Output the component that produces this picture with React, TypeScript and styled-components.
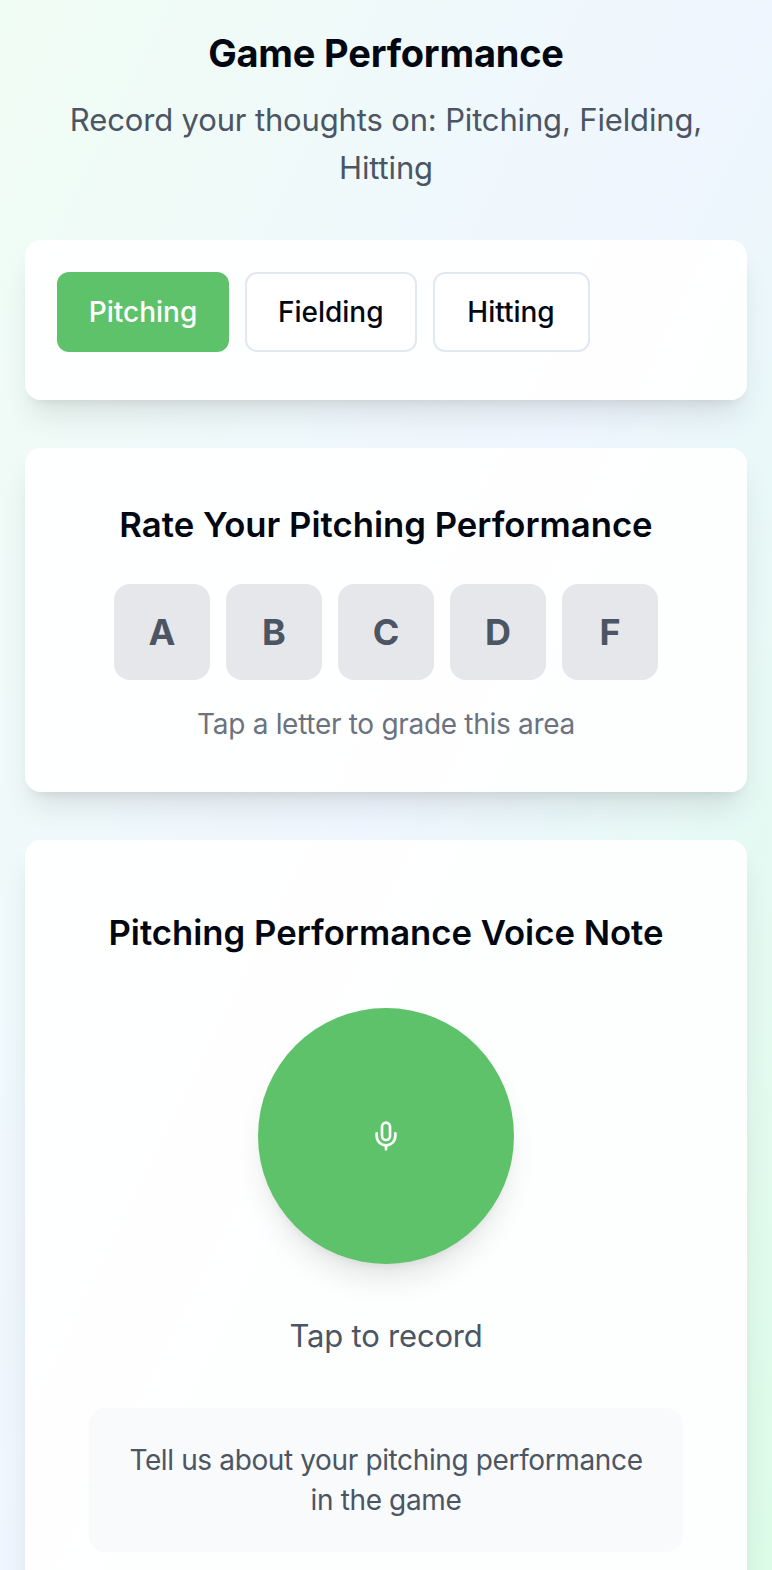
import React, { useState } from "react";
import styled, { createGlobalStyle } from "styled-components";
import { Mic } from "lucide-react";

const GlobalStyle = createGlobalStyle`
  html, body {
    margin: 0;
    padding: 0;
  }
  body {
    font-family: Inter, "Liberation Sans", sans-serif;
    color: #0a0a1a;
  }
  * {
    box-sizing: border-box;
  }
`;

const Page = styled.main`
  height: 1570px;
  overflow: hidden;
  padding: 30px 25px 0;
  background: linear-gradient(to bottom right, #f0fdf4 0%, #eff6ff 50%, #dcfce7 100%);
`;

const Header = styled.header`
  text-align: center;
  margin-bottom: 48px;
`;

const Title = styled.h1`
  margin: 0 0 20px;
  font-size: 38px;
  line-height: 46px;
  font-weight: 700;
  letter-spacing: -0.2px;
  color: #030712;
`;

const Subtitle = styled.p`
  margin: 0;
  padding: 0 16px;
  font-size: 31px;
  line-height: 48px;
  letter-spacing: -0.15px;
  color: #4b5563;
`;

const Card = styled.section<{ $pad: number }>`
  background: rgba(255, 255, 255, 0.9);
  border-radius: 16px;
  padding: ${(p) => p.$pad}px 32px;
  margin-bottom: 48px;
  box-shadow: 0 20px 30px -6px rgba(0, 0, 0, 0.1), 0 8px 12px -8px rgba(0, 0, 0, 0.1);
`;

const Tabs = styled.div`
  display: flex;
  gap: 16px;
  padding-bottom: 16px;
`;

const Tab = styled.button<{ $active?: boolean; $width: number }>`
  width: ${(p) => p.$width}px;
  height: 80px;
  padding: 0;
  border-radius: 12px;
  border: ${(p) => (p.$active ? "none" : "2px solid #e2e8f0")};
  background: ${(p) => (p.$active ? "#5ec26a" : "#fff")};
  color: ${(p) => (p.$active ? "#fff" : "#030712")};
  font: 500 28px Inter, sans-serif;
`;

const CardTitle = styled.h2`
  margin: 0;
  text-align: center;
  font-size: 34.7px;
  line-height: 56px;
  font-weight: 600;
  color: #030712;
`;

const Grades = styled.div`
  display: flex;
  justify-content: center;
  gap: 16px;
  margin-top: 32px;
`;

const Grade = styled.button`
  width: 96px;
  height: 96px;
  border: none;
  border-radius: 16px;
  background: #e5e7eb;
  color: #4b5563;
  font: 700 36px Inter, sans-serif;
`;

const Hint = styled.p`
  margin: 24px 0 0;
  text-align: center;
  font-size: 28px;
  line-height: 40px;
  letter-spacing: -0.3px;
  color: #6b7280;
`;

const RecordArea = styled.div`
  display: flex;
  flex-direction: column;
  align-items: center;
`;

const RecordButton = styled.button`
  display: flex;
  align-items: center;
  justify-content: center;
  width: 256px;
  height: 256px;
  margin-top: 48px;
  border: none;
  border-radius: 50%;
  background: #5ec26a;
  color: #fff;
  box-shadow: 0 20px 30px -6px rgba(0, 0, 0, 0.1), 0 8px 12px -8px rgba(0, 0, 0, 0.1);
`;

const RecordLabel = styled.p`
  margin: 48px 0 0;
  font-size: 31px;
  line-height: 48px;
  letter-spacing: -0.2px;
  color: #4b5563;
`;

const Prompt = styled.div`
  width: 594px;
  margin: 48px auto 0;
  padding: 33px 32px 32px;
  border-radius: 16px;
  background: #f9fafb;
  text-align: center;
  font-size: 28px;
  line-height: 39.5px;
  letter-spacing: -0.37px;
  color: #4b5563;
`;

const TABS = [
  { label: "Pitching", width: 172 },
  { label: "Fielding", width: 171.5 },
  { label: "Hitting", width: 157 },
];
const GRADES = ["A", "B", "C", "D", "F"];

export default function App() {
  const [activeTab] = useState("Pitching");

  return (
    <Page>
      <GlobalStyle />
      <Header>
        <Title>Game Performance</Title>
        <Subtitle>Record your thoughts on: Pitching, Fielding, Hitting</Subtitle>
      </Header>

      <Card $pad={32}>
        <Tabs>
          {TABS.map((tab) => (
            <Tab key={tab.label} $width={tab.width} $active={tab.label === activeTab}>
              {tab.label}
            </Tab>
          ))}
        </Tabs>
      </Card>

      <Card $pad={48}>
        <CardTitle>Rate Your Pitching Performance</CardTitle>
        <Grades>
          {GRADES.map((grade) => (
            <Grade key={grade}>{grade}</Grade>
          ))}
        </Grades>
        <Hint>Tap a letter to grade this area</Hint>
      </Card>

      <Card $pad={64}>
        <RecordArea>
          <CardTitle>Pitching Performance Voice Note</CardTitle>
          <RecordButton aria-label="Tap to record">
            <Mic size={32} strokeWidth={2} />
          </RecordButton>
          <RecordLabel>Tap to record</RecordLabel>
        </RecordArea>
        <Prompt>Tell us about your pitching performance in the game</Prompt>
      </Card>
    </Page>
  );
}
